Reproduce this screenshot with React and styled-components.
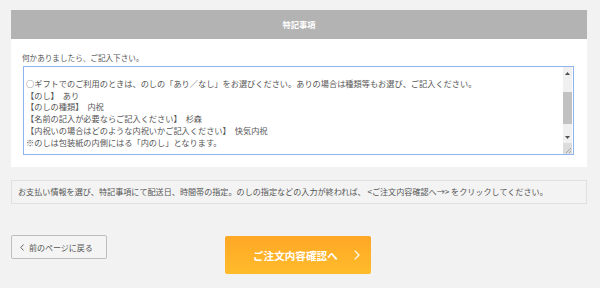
import React from 'react'
import styled, {createGlobalStyle} from 'styled-components'

const GlobalStyle = createGlobalStyle`
  html, body {
    margin: 0;
    padding: 0;
    background: #f2f2f2;
  }
  body {
    font-family: "Noto Sans CJK JP", "Noto Sans", sans-serif;
    color: #555;
  }
`

const Page = styled.div`
  padding: 10px 13px 0 11px;
  width: 576px;
`

const Panel = styled.section`
  background: #fff;
`

const PanelHeader = styled.h2`
  margin: 0;
  height: 29px;
  background: #b3b3b3;
  color: #fff;
  font-size: 8.2px;
  font-weight: 700;
  line-height: 29px;
  text-align: center;
`

const PanelBody = styled.div`
  padding: 13px 13px 12px 11px;
`

const Label = styled.p`
  margin: 0 0 3px 0;
  font-size: 7.6px;
  line-height: 11px;
`

const Field = styled.div`
  display: flex;
  margin-left: 1px;
  height: 87px;
  border: 1px solid #8fb4ee;
  background: #fff;
`

const TextArea = styled.textarea`
  flex: 1;
  border: 0;
  outline: none;
  resize: none;
  overflow: hidden;
  margin: 0;
  padding: 11px 2px 0 2px;
  font-family: "Noto Sans CJK JP", "Noto Sans", sans-serif;
  font-size: 8.2px;
  line-height: 11.7px;
  color: #555;
  background: transparent;
  white-space: pre;
`

const ScrollBar = styled.div`
  display: flex;
  flex-direction: column;
  width: 9px;
  margin-right: 1px;
  background: #f0f0f0;
`

const ScrollButton = styled.div`
  height: 12px;
  display: flex;
  align-items: center;
  justify-content: center;
`

const Track = styled.div`
  flex: 1;
  padding-top: ${p => p.top}px;
`

const Thumb = styled.div`
  height: 32px;
  background: #c1c1c1;
`

const Corner = styled.div`
  height: 11px;
  background: #dcdcdc;
  display: flex;
  align-items: flex-end;
  justify-content: flex-end;
`

const Notice = styled.div`
  margin-top: 13px;
  height: 22px;
  border: 1px solid #e0e0e0;
  background: #f3f3f3;
  padding-left: 6px;
  font-size: 8.1px;
  line-height: 22px;
  white-space: nowrap;
`

const Actions = styled.div`
  display: flex;
  align-items: flex-start;
  margin-top: 31px;
`

const BackButton = styled.button`
  display: flex;
  align-items: center;
  gap: 5px;
  width: 96px;
  height: 24px;
  padding: 0 0 0 8px;
  border: 1px solid #bdbdbd;
  border-radius: 2px;
  background: #f4f4f4;
  color: #555;
  font-family: "Noto Sans CJK JP", "Noto Sans", sans-serif;
  font-size: 8px;
  cursor: pointer;
`

const ConfirmButton = styled.button`
  display: flex;
  align-items: center;
  margin: 1px 0 0 118px;
  width: 146px;
  height: 38px;
  padding: 0 0 0 28px;
  border: 0;
  border-radius: 2px;
  background: linear-gradient(#ffa726, #ffbc2a);
  color: #fff;
  font-family: "Noto Sans CJK JP", "Noto Sans", sans-serif;
  font-size: 10.6px;
  font-weight: 700;
  cursor: pointer;
`

const ConfirmArrow = styled.svg`
  margin-left: 16px;
`

const noteValue = [
  '○ギフトでのご利用のときは、のしの「あり／なし」をお選びください。ありの場合は種類等もお選び、ご記入ください。',
  '【のし】　あり',
  '【のしの種類】　内祝',
  '【名前の記入が必要ならご記入ください】　杉森',
  '【内祝いの場合はどのような内祝いかご記入ください】　快気内祝',
  '※のしは包装紙の内側にはる「内のし」となります。'
].join('\n')

const Arrow = ({down}) => (
  <svg width='5' height='3' viewBox='0 0 5 3'>
    <polygon points={down ? '0,0 5,0 2.5,3' : '0,3 5,3 2.5,0'} fill='#505050' />
  </svg>
)

export default function App () {
  return (
    <>
      <GlobalStyle />
      <Page>
        <Panel>
          <PanelHeader>特記事項</PanelHeader>
          <PanelBody>
            <Label>何かありましたら、ご記入下さい。</Label>
            <Field>
              <TextArea defaultValue={noteValue} readOnly />
              <ScrollBar>
                <ScrollButton><Arrow /></ScrollButton>
                <Track top={13}><Thumb /></Track>
                <ScrollButton><Arrow down /></ScrollButton>
                <Corner>
                  <svg width='8' height='8' viewBox='0 0 8 8'>
                    <path d='M7 2 L2 7 M7 5 L5 7' stroke='#999' strokeWidth='0.8' />
                  </svg>
                </Corner>
              </ScrollBar>
            </Field>
          </PanelBody>
        </Panel>
        <Notice>
          お支払い情報を選び、特記事項にて配送日、時間帯の指定。のしの指定などの入力が終われば、 &lt;ご注文内容確認へ→&gt; をクリックしてください。
        </Notice>
        <Actions>
          <BackButton type='button'>
            <svg width='4' height='7' viewBox='0 0 4 7'>
              <polyline points='3.5,0.5 0.8,3.5 3.5,6.5' fill='none' stroke='#666' strokeWidth='1' />
            </svg>
            前のページに戻る
          </BackButton>
          <ConfirmButton type='button'>
            ご注文内容確認へ
            <ConfirmArrow width='6' height='10' viewBox='0 0 6 10'>
              <polyline points='0.7,0.7 5,5 0.7,9.3' fill='none' stroke='#fff' strokeWidth='1.2' />
            </ConfirmArrow>
          </ConfirmButton>
        </Actions>
      </Page>
    </>
  )
}
